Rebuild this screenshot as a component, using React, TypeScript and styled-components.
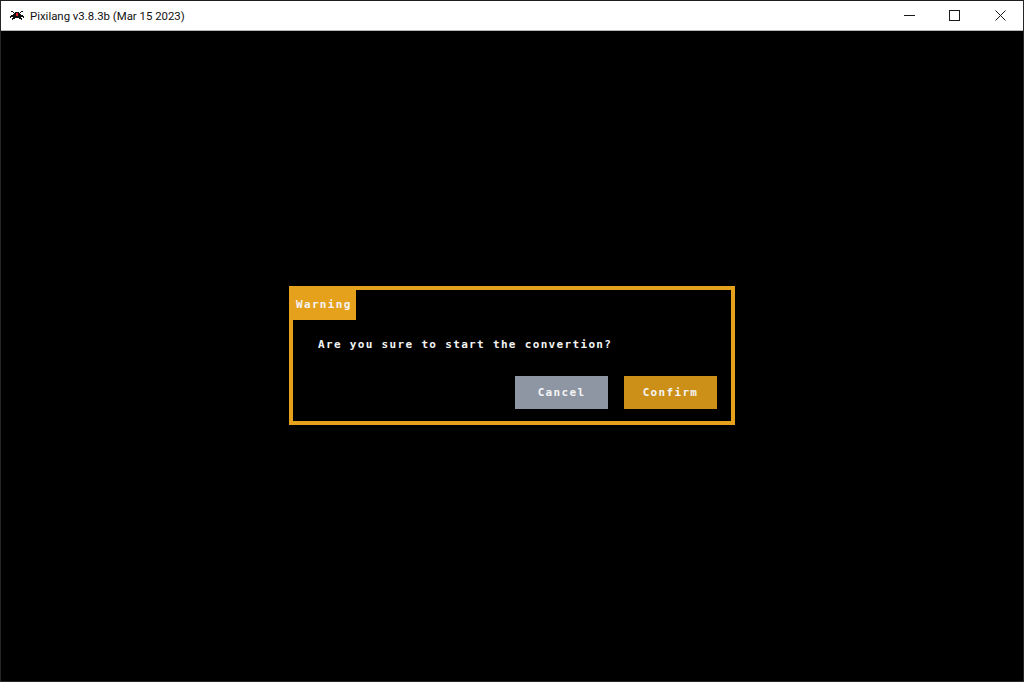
import React from "react";
import styled, { createGlobalStyle } from "styled-components";

const GlobalStyle = createGlobalStyle`
  html, body {
    margin: 0;
    padding: 0;
    height: 100%;
    background: #000;
  }
  #root {
    height: 100%;
  }
`;

const Window = styled.div`
  box-sizing: border-box;
  width: 1024px;
  height: 682px;
  display: flex;
  flex-direction: column;
  border: 1px solid #262626;
  border-top-color: #1c1c1c;
  background: #000;
  overflow: hidden;
`;

const TitleBar = styled.div`
  box-sizing: border-box;
  height: 30px;
  flex: none;
  display: flex;
  align-items: center;
  background: #fff;
  border-bottom: 1px solid #b9b9b9;
`;

const AppIcon = styled.svg`
  width: 14px;
  height: 9px;
  margin-left: 9px;
  flex: none;
`;

const TitleText = styled.span`
  margin-left: 6px;
  flex: 1;
  font-family: Roboto, "Open Sans", sans-serif;
  font-size: 11.4px;
  color: #111;
  white-space: nowrap;
`;

const WindowButton = styled.div<{ $close?: boolean }>`
  width: 45px;
  height: 29px;
  padding-left: ${(p) => (p.$close ? "1px" : "0")};
  display: flex;
  align-items: center;
  justify-content: center;
  color: #1a1a1a;
`;

const Stage = styled.main`
  flex: 1;
  padding-bottom: 1px;
  display: flex;
  align-items: center;
  justify-content: center;
  background: #000;
`;

const Dialog = styled.section`
  box-sizing: border-box;
  width: 446px;
  height: 139px;
  display: flex;
  flex-direction: column;
  border: 4px solid #e5a11c;
  background: #000;
  font-family: "DejaVu Sans Mono", "Liberation Mono", monospace;
  font-weight: 700;
  font-size: 11px;
  letter-spacing: 1.33px;
  color: #f4f4f4;
`;

const Tab = styled.div`
  width: 63px;
  height: 30px;
  flex: none;
  box-sizing: border-box;
  padding: 0 0 1px 3px;
  display: flex;
  align-items: center;
  background: #e5a11c;
  white-space: nowrap;
`;

const Message = styled.p`
  margin: 0;
  padding: 18px 0 0 25px;
  height: 14px;
  line-height: 14px;
  white-space: nowrap;
`;

const Actions = styled.div`
  margin-top: auto;
  padding: 0 14px 12px 0;
  display: flex;
  justify-content: flex-end;
  gap: 16px;
`;

const ActionButton = styled.button<{ $tone: string }>`
  width: 93px;
  height: 33px;
  padding: 0;
  border: 0;
  background: ${(p) => p.$tone};
  color: inherit;
  font: inherit;
  letter-spacing: inherit;
`;

export default function App() {
  return (
    <>
      <GlobalStyle />
      <Window>
        <TitleBar>
          <AppIcon viewBox="0 0 14 9" shapeRendering="crispEdges">
            <path
              fill="#111"
              d="M1 0h2v1h1v1h1V1h4v1h1V1h1V0h2v1h-2v1h-1v1h1v1h2v1h1v2h-1V6h-2v1h1v2h-1V8h-2V7H5v1H3v1H2V7h1V6H1v1H0V5h1V4h2V3h1V2H3V1H1z"
            />
            <path fill="#e0242a" d="M6 2h2v3H6z" />
          </AppIcon>
          <TitleText>Pixilang v3.8.3b (Mar 15 2023)</TitleText>
          <WindowButton>
            <svg width="11" height="11" viewBox="0 0 11 11">
              <path d="M0 5.5h11" stroke="currentColor" fill="none" />
            </svg>
          </WindowButton>
          <WindowButton>
            <svg width="11" height="11" viewBox="0 0 11 11">
              <rect x="0.5" y="0.5" width="10" height="10" stroke="currentColor" fill="none" />
            </svg>
          </WindowButton>
          <WindowButton $close>
            <svg width="11" height="11" viewBox="0 0 11 11">
              <path d="M0.5 0.5l10 10M10.5 0.5l-10 10" stroke="currentColor" fill="none" />
            </svg>
          </WindowButton>
        </TitleBar>
        <Stage>
          <Dialog>
            <Tab>Warning</Tab>
            <Message>Are you sure to start the convertion?</Message>
            <Actions>
              <ActionButton $tone="#8f96a3">Cancel</ActionButton>
              <ActionButton $tone="#cc8f17">Confirm</ActionButton>
            </Actions>
          </Dialog>
        </Stage>
      </Window>
    </>
  );
}
